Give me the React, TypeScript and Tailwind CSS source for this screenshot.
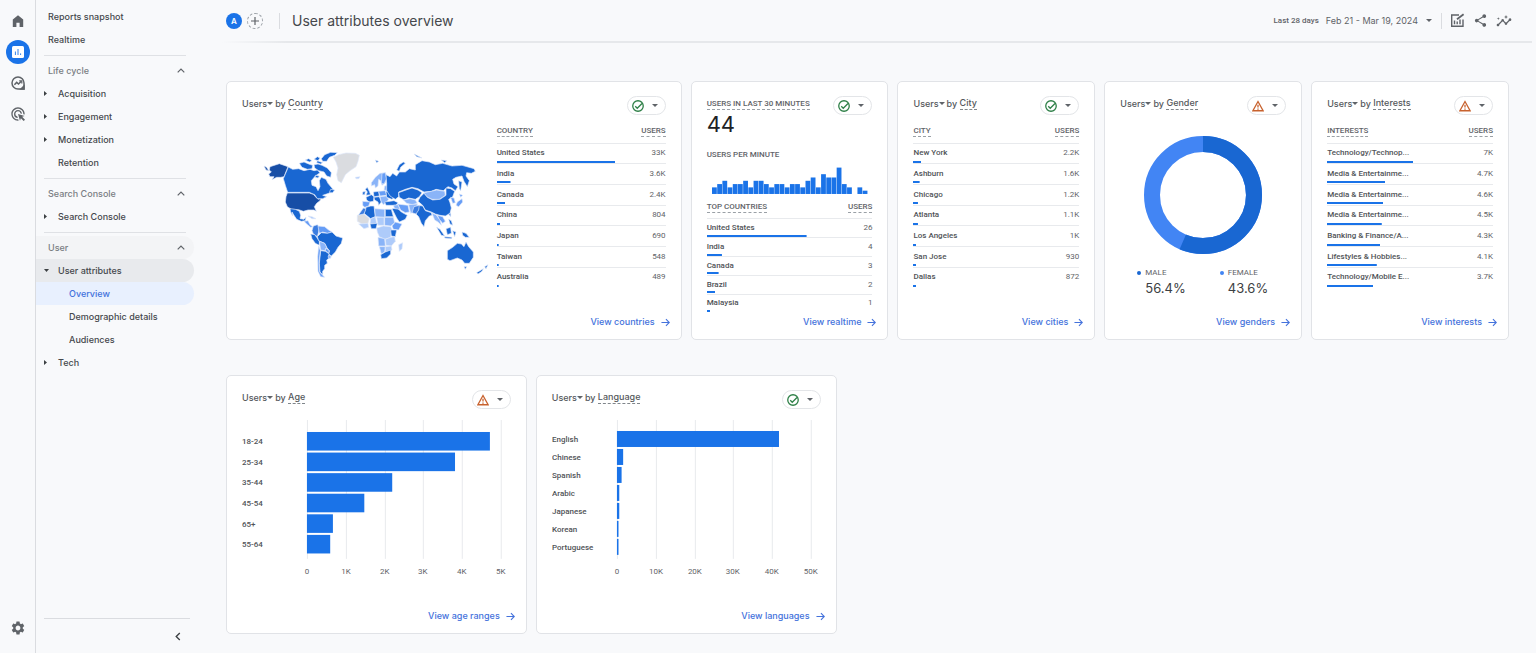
import type { ReactNode } from 'react';
import { MdAdsClick, MdInsights, MdSettings, MdShare } from 'react-icons/md';

type Status = 'ok' | 'warn';

interface Row {
  name: string;
  users: string;
  /** bar length, percent of the table width */
  bar: number;
}

const countries: Row[] = [
  { name: 'United States', users: '33K', bar: 70 },
  { name: 'India', users: '3.6K', bar: 8 },
  { name: 'Canada', users: '2.4K', bar: 5 },
  { name: 'China', users: '804', bar: 2 },
  { name: 'Japan', users: '690', bar: 1 },
  { name: 'Taiwan', users: '548', bar: 1 },
  { name: 'Australia', users: '489', bar: 1 },
];

const realtime: Row[] = [
  { name: 'United States', users: '26', bar: 60 },
  { name: 'India', users: '4', bar: 9 },
  { name: 'Canada', users: '3', bar: 7 },
  { name: 'Brazil', users: '2', bar: 5 },
  { name: 'Malaysia', users: '1', bar: 2 },
];

const cities: Row[] = [
  { name: 'New York', users: '2.2K', bar: 5 },
  { name: 'Ashburn', users: '1.6K', bar: 4 },
  { name: 'Chicago', users: '1.2K', bar: 3 },
  { name: 'Atlanta', users: '1.1K', bar: 3 },
  { name: 'Los Angeles', users: '1K', bar: 2 },
  { name: 'San Jose', users: '930', bar: 2 },
  { name: 'Dallas', users: '872', bar: 2 },
];

const interests: Row[] = [
  { name: 'Technology/Technop...', users: '7K', bar: 52 },
  { name: 'Media & Entertainme...', users: '4.7K', bar: 35 },
  { name: 'Media & Entertainme...', users: '4.6K', bar: 34 },
  { name: 'Media & Entertainme...', users: '4.5K', bar: 33 },
  { name: 'Banking & Finance/A...', users: '4.3K', bar: 32 },
  { name: 'Lifestyles & Hobbies...', users: '4.1K', bar: 30 },
  { name: 'Technology/Mobile E...', users: '3.7K', bar: 28 },
];

const perMinute = [2, 3, 4, 2, 3, 3, 4, 2, 4, 4, 3, 2, 3, 3, 2, 3, 3, 2, 4, 5, 2, 6, 5, 5, 8, 3, 2, 0, 2, 1];

const ages = [
  { label: '18-24', value: 4.72 },
  { label: '25-34', value: 3.82 },
  { label: '35-44', value: 2.2 },
  { label: '45-54', value: 1.48 },
  { label: '65+', value: 0.67 },
  { label: '55-64', value: 0.6 },
];

const languages = [
  { label: 'English', value: 41.8 },
  { label: 'Chinese', value: 1.6 },
  { label: 'Spanish', value: 1.2 },
  { label: 'Arabic', value: 0.6 },
  { label: 'Japanese', value: 0.6 },
  { label: 'Korean', value: 0.4 },
  { label: 'Portuguese', value: 0.4 },
];

function Caret({ className = '' }: { className?: string }) {
  return (
    <svg viewBox="0 0 6 3" className={`h-[3px] w-[6px] shrink-0 fill-[#5f6368] ${className}`} aria-hidden="true">
      <path d="M0 0h6L3 3z" />
    </svg>
  );
}

function StatusIcon({ status }: { status: Status }) {
  if (status === 'ok') {
    return (
      <svg viewBox="0 0 24 24" className="size-3" fill="none" stroke="#2f8048" strokeWidth="2.6" aria-hidden="true">
        <circle cx="12" cy="12" r="10.5" />
        <path d="M6.5 12.5l4 4L20 7" />
      </svg>
    );
  }
  return (
    <svg viewBox="0 0 24 24" className="size-3" fill="none" stroke="#c8622e" strokeWidth="2.6" aria-hidden="true">
      <path d="M12 3L1.8 21.5h20.4z" />
      <path d="M12 9.5v5.5M12 17v2.4" />
    </svg>
  );
}

function StatusChip({ status }: { status: Status }) {
  return (
    <button
      type="button"
      aria-label={status === 'ok' ? 'Data quality: good' : 'Data quality: thresholding applied'}
      className="flex h-[19px] w-[39px] shrink-0 items-center justify-between rounded-full border border-[#e3e5e8] pr-[7px] pl-1"
    >
      <StatusIcon status={status} />
      <Caret />
    </button>
  );
}

function CardLink({ children }: { children: ReactNode }) {
  return (
    <a
      href="#"
      className="mt-auto -mr-1 flex items-center gap-[6px] self-end text-[9px] leading-4 font-medium text-[#4472dc]"
    >
      {children}
      <svg viewBox="0 0 10 10" className="size-[9px]" fill="none" stroke="currentColor" strokeWidth="1.2" aria-hidden="true">
        <path d="M0.5 5h8.5M5.5 1.2L9.2 5 5.5 8.8" />
      </svg>
    </a>
  );
}

function Card({ dimension, status, link, children }: {
  dimension?: string;
  status: Status;
  link: string;
  children: ReactNode;
}) {
  return (
    <section className="flex h-[259px] min-w-0 flex-col rounded-[5px] border border-[#e1e3e7] bg-white px-[15px] pt-[14px] pb-[9px]">
      {dimension ? (
        <>
          <header className="flex h-[19px] items-center justify-between">
            <h2 className="flex items-center pb-1 text-[9px] leading-3 font-medium text-[#55585c]">
              <button type="button" className="flex items-center">
                Users
                <Caret />
              </button>
              <span className="ml-[2px]">by&nbsp;</span>
              <span className="border-b border-dashed border-[#80868b]">{dimension}</span>
            </h2>
            <StatusChip status={status} />
          </header>
          {children}
        </>
      ) : (
        children
      )}
      <CardLink>{link}</CardLink>
    </section>
  );
}

function MetricTable({ label, rows, height }: { label: string; rows: Row[]; height: string }) {
  return (
    <table className={`w-full border-collapse font-[Roboto,sans-serif] text-[8px] leading-[10px] text-[#5f6368] ${height}`}>
      <thead>
        <tr className="h-[19px] border-b border-[#e8eaed]">
          <th className="p-0 pb-1 text-left font-medium">
            <span className="border-b border-dashed border-[#9aa0a6] pb-[1px]">{label}</span>
          </th>
          <th className="p-0 pb-1 text-right font-medium">
            <span className="border-b border-dashed border-[#9aa0a6] pb-[1px]">USERS</span>
          </th>
        </tr>
      </thead>
      <tbody>
        {rows.map((row, i) => (
          <tr
            key={i}
            className="border-b border-[#e8eaed] bg-[linear-gradient(#1a73e8,#1a73e8)] bg-bottom-left bg-no-repeat last:border-0"
            style={{ backgroundSize: `${row.bar}% 2px` }}
          >
            <td className="p-0 font-medium text-[#505357]">{row.name}</td>
            <td className="p-0 text-right">{row.users}</td>
          </tr>
        ))}
      </tbody>
    </table>
  );
}

function HBarChart({ data, max, ticks, top, pitch, thickness }: {
  data: { label: string; value: number }[];
  max: number;
  ticks: string[];
  top: number;
  pitch: number;
  thickness: number;
}) {
  const left = 65;
  const span = 194;
  return (
    <svg viewBox="0 0 269 160" className="mt-[11px] w-full font-[Roboto,sans-serif] text-[8px]" role="img">
      {ticks.map((t, i) => {
        const x = Math.round(left + (span * i) / (ticks.length - 1));
        return (
          <g key={t}>
            <path d={`M${x + 0.5} 0V139`} stroke="#e8eaed" />
            <text x={x} y="154" textAnchor="middle" fill="#5f6368">
              {t}
            </text>
          </g>
        );
      })}
      {data.map((d, i) => {
        const y = top + i * pitch;
        return (
          <g key={d.label}>
            <text x="0" y={y + thickness / 2 + 3} fill="#505357" fontWeight="500">
              {d.label}
            </text>
            <rect x={left} y={y} width={(d.value / max) * span} height={thickness} fill="#1a73e8" />
          </g>
        );
      })}
    </svg>
  );
}

function WorldMap() {
  return (
    <svg viewBox="0 0 690 390" className="w-full" role="img" aria-label="Users by country">
      <g transform="translate(-40 -30)" stroke="#dfe9fb" strokeWidth="2" strokeLinejoin="round" fill="#1967d2">
        {/* North America */}
        <g fill="#174ea6">
          <path d="M64 80L80 75 92 71 118 80 106 110 96 112 84 112 70 119 76 110 64 110 60 102 68 96 62 90z" />
          <path d="M46 78L54 82 60 92 52 90z" />
          <path d="M116 159H182L194 163 204 174 210 178 218 174 214 182 204 190 197 200 203 214 196 210 178 210 164 214 150 209 128 208 116 200 110 186 112 170z" />
        </g>
        <path d="M119 81L132 88 150 86 166 92 184 88 196 92 206 90 214 98 200 108 188 122 190 136 202 140 208 152 214 140 212 122 218 112 232 118 238 130 250 144 256 154 240 160 222 166 234 170 222 176 206 176 198 164 182 157H117L110 136 104 116z" />
        <path d="M152 70L166 66 180 72 192 76 190 86 176 88 160 82zM196 58L206 50 214 54 208 62zM218 56L228 44 246 37 266 38 258 46 242 52 234 64 222 64zM196 74L208 72 220 76 236 84 248 98 246 112 234 108 226 96 210 92 198 84zM170 60L180 56 190 62 182 66zM206 62L222 68 216 72 204 68zM200 106L212 108 208 114 200 112zM246 148L258 150 252 158 242 158z" />
        <path d="M124 206L140 208 152 214 156 226 154 236 166 238 172 232 170 242 158 244 144 238 136 226 130 216 132 228 126 216z" />
        <path d="M166 244L178 242 184 254 192 260 186 262 174 252z" fill="#669df6" />
        <path d="M178 228L190 230 202 236 190 236z" fill="#aecbfa" />
        <path d="M254 52L270 44 292 39 320 40 332 46 328 64 322 80 304 92 290 104 278 128 268 122 264 104 268 84 262 66z" fill="#dadce0" />

        {/* South America */}
        <path d="M194 258L206 254 212 262 210 276 206 290 194 282 190 272z" fill="#3c7de0" />
        <path d="M208 258L228 260 240 270 250 276 236 280 222 276 212 280z" fill="#669df6" />
        <path d="M186 282L198 284 204 292 212 304 212 316 200 310 190 296z" />
        <path d="M206 290L218 278 236 280 250 276 262 288 282 294 278 310 268 322 260 336 248 348 240 342 242 332 234 322 228 310 210 302z" />
        <path d="M212 304L228 310 234 322 228 332 216 330z" fill="#8ab4f8" />
        <path d="M232 324L242 332 240 340 230 332z" fill="#669df6" />
        <path d="M216 332L230 334 242 342 242 354 234 360 236 370 228 376 228 386 222 394 222 404 214 396 212 370z" />
        <path d="M210 318L215 332 211 368 213 396 228 412 216 410 208 394 207 350z" fill="#669df6" />
        <path d="M240 344L248 350 244 356 238 352z" fill="#8ab4f8" />

        {/* Europe */}
        <path d="M368 128L380 112 394 100 410 98 414 108 410 128 400 136 396 122 390 118 388 138 380 144 378 134 368 138z" fill="#8ab4f8" />
        <path d="M400 100L410 98 414 116 406 132 398 130z" fill="#669df6" />
        <path d="M320 112L334 110 330 116 322 116z" fill="#aecbfa" />
        <path d="M350 148L356 142 362 154 366 164 352 166 356 156zM342 156L350 154 348 164 342 164z" />
        <path d="M352 172L368 164 376 170 374 184 362 186 354 180z" />
        <path d="M342 184L364 186 360 198 348 202 342 196z" fill="#669df6" />
        <path d="M374 156L390 154 392 168 376 170z" />
        <path d="M390 154L410 152 414 166 394 168z" fill="#669df6" />
        <path d="M376 172L392 170 398 186 390 196 388 186 378 180z" />
        <path d="M394 170L412 168 420 178 414 186 404 194 398 186z" fill="#8ab4f8" />
        <path d="M412 154L436 156 442 166 430 178 414 172z" />
        <path d="M408 138L418 136 420 152 406 150z" fill="#8ab4f8" />

        {/* Russia and Asia */}
        <path d="M412 104L424 110 432 100 444 108 452 96 470 96 482 86 500 90 500 74 520 62 542 66 560 74 582 70 610 78 640 76 676 86 680 94 668 100 654 98 652 108 662 122 656 140 646 124 640 108 622 112 612 118 616 132 628 140 620 152 610 144 598 140 584 152 562 148 548 154 526 156 508 146 490 142 470 148 450 156 450 170 440 178 424 168 414 152 414 130z" />
        <path d="M444 90L452 74 464 66 470 70 456 82 452 94zM496 42L508 48 520 54 504 50zM578 60L594 62 588 68zM630 122L640 126 636 152 632 146zM380 60L390 64 384 68z" />
        <path d="M450 158L472 150 490 144 508 150 520 158 512 170 500 178 480 174 466 180 452 172z" />
        <path d="M526 158L548 154 564 150 588 154 590 166 572 178 550 178 534 170z" fill="#8ab4f8" />
        <path d="M514 172L526 160 536 172 552 180 574 178 592 166 592 144 606 146 618 154 612 170 600 178 604 188 608 204 604 220 590 228 574 226 560 222 548 216 530 210 522 196 508 184z" />
        <path d="M606 172L616 174 620 188 612 190zM626 186L640 176 642 186 630 200 622 196zM632 162L642 166 636 172z" fill="#669df6" />
        <path d="M508 196L522 198 530 212 548 218 550 226 542 228 530 242 526 260 518 250 510 230 502 222z" />
        <path d="M464 180L484 176 500 180 506 190 492 194 474 190z" fill="#8ab4f8" />
        <path d="M408 186L436 182 448 188 442 196 412 196z" />
        <path d="M446 192L462 194 478 196 482 216 470 218 456 210z" fill="#669df6" />
        <path d="M480 194L506 192 502 214 486 220z" fill="#8ab4f8" />
        <path d="M496 200L512 196 510 210 502 222 490 218z" fill="#3c7de0" />
        <path d="M430 206L446 204 458 216 476 226 470 238 452 246 444 234z" />
        <path d="M434 196L448 194 454 208 438 206z" fill="#8ab4f8" />
        <path d="M550 220L562 224 574 240 578 256 568 246 558 240z" fill="#8ab4f8" />
        <path d="M566 226L582 230 590 244 582 250 572 238z" fill="#669df6" />
        <path d="M564 262L574 268 588 288 578 286zM592 266L606 262 608 280 596 284zM588 290L610 292 608 296 588 294zM612 272L622 276 618 290zM600 238L608 242 612 256 604 252zM640 276L652 280 662 292 650 292 642 286z" />
        <path d="M600 222L606 220 606 230z" />

        {/* Africa */}
        <path d="M352 202L366 198 376 198 380 230 366 236 346 220z" />
        <path d="M330 224L344 204 352 206 346 222 336 230z" fill="#3c7de0" />
        <path d="M326 226L346 222 362 236 358 250 340 252 326 244z" fill="#dadce0" />
        <path d="M330 252L358 250 360 262 346 266z" fill="#aecbfa" />
        <path d="M378 206L408 208 408 232 380 230z" fill="#8ab4f8" />
        <path d="M410 208L428 208 434 230 410 230z" />
        <path d="M366 236L380 230 384 250 364 252z" fill="#aecbfa" />
        <path d="M384 232L406 232 406 256 388 256z" fill="#aecbfa" />
        <path d="M408 232L434 232 438 248 426 258 408 256z" fill="#8ab4f8" />
        <path d="M364 252L386 250 382 266 368 266z" />
        <path d="M430 258L440 246 460 252 450 270 434 268z" fill="#669df6" />
        <path d="M384 264L404 258 426 260 430 268 426 292 408 298 392 290 386 276z" fill="#aecbfa" />
        <path d="M426 270L444 270 440 290 428 288z" />
        <path d="M388 292L408 296 410 318 390 318z" fill="#8ab4f8" />
        <path d="M410 298L426 292 438 290 440 304 428 318 412 316z" fill="#aecbfa" />
        <path d="M392 320L410 320 408 336 398 342z" fill="#8ab4f8" />
        <path d="M410 320L428 318 430 330 420 334 410 336z" fill="#aecbfa" />
        <path d="M396 344L410 336 426 330 426 342 414 354 398 356z" />
        <path d="M450 314L462 308 460 326 452 334z" fill="#aecbfa" />

        {/* Oceania */}
        <path d="M596 332L612 322 626 310 638 312 646 320 652 306 660 320 674 336 674 352 662 370 648 370 640 360 626 354 604 362 596 358z" />
        <path d="M646 380L654 380 650 388zM708 380L718 374 712 386zM684 398L704 386 700 394 688 402z" />
      </g>
    </svg>
  );
}

function Donut() {
  const r = 51;
  const c = 2 * Math.PI * r;
  return (
    <svg viewBox="0 0 120 120" className="mx-auto mt-5 size-[120px]" role="img" aria-label="Male 56.4%, female 43.6%">
      <g fill="none" strokeWidth="16" transform="rotate(-90 60 60)">
        <circle cx="60" cy="60" r={r} stroke="#4285f4" />
        <circle cx="60" cy="60" r={r} stroke="#1967d2" strokeDasharray={`${c * 0.564} ${c}`} />
      </g>
    </svg>
  );
}

function GenderStat({ label, value, dot }: { label: string; value: string; dot: string }) {
  return (
    <div className="flex gap-1">
      <span className={`mt-[4px] size-1 rounded-full ${dot}`} />
      <dl>
        <dt className="font-[Roboto,sans-serif] text-[8px] leading-3 text-[#5f6368]">{label}</dt>
        <dd className="text-[13px] leading-[18px] text-[#3c4043]">{value}</dd>
      </dl>
    </div>
  );
}

function NavSection({ title, highlighted = false, children }: { title: string; highlighted?: boolean; children: ReactNode }) {
  return (
    <section className="mt-1">
      <div className="mr-2 ml-2 h-px bg-[#dfe1e5]" />
      <button
        type="button"
        aria-expanded="true"
        className={`mt-[3px] flex h-[23px] w-full items-center justify-between rounded-r-full pr-[9px] pl-3 text-[#7a7e83] ${highlighted ? 'bg-[#f3f4f6]' : ''}`}
      >
        {title}
        <svg viewBox="0 0 8 5" className="h-[5px] w-2" fill="none" stroke="#5f6368" strokeWidth="1.2" aria-hidden="true">
          <path d="M0.7 4.3L4 1l3.3 3.3" />
        </svg>
      </button>
      <ul>{children}</ul>
    </section>
  );
}

function NavItem({ label, arrow, active = false }: { label: string; arrow?: 'right' | 'down'; active?: boolean }) {
  return (
    <li>
      <a href="#" className={`flex h-[23px] items-center rounded-r-full pl-2 ${active ? 'bg-[#e8eaed]' : ''}`}>
        <span className="flex w-[14px] items-center">
          {arrow === 'right' && (
            <svg viewBox="0 0 3 5" className="h-[5px] w-[3px] fill-[#3c4043]" aria-hidden="true">
              <path d="M0 0v5l3-2.5z" />
            </svg>
          )}
          {arrow === 'down' && (
            <svg viewBox="0 0 5 3" className="h-[3px] w-[5px] fill-[#3c4043]" aria-hidden="true">
              <path d="M0 0h5L2.5 3z" />
            </svg>
          )}
        </span>
        {label}
      </a>
    </li>
  );
}

function NavSubItem({ label, current = false }: { label: string; current?: boolean }) {
  return (
    <li>
      <a
        href="#"
        aria-current={current ? 'page' : undefined}
        className={`flex h-[23px] items-center rounded-r-full pl-[33px] ${current ? 'bg-[#e8f0fe] text-[#4472dc]' : ''}`}
      >
        {label}
      </a>
    </li>
  );
}

function Rail() {
  return (
    <nav aria-label="Products" className="flex w-9 shrink-0 flex-col items-center border-r border-[#dadce0] text-[#5f6368]">
      <a href="#" aria-label="Home" className="mt-[5px] flex size-[31px] items-center justify-center">
        <svg viewBox="0 0 12 12" className="size-3" fill="currentColor" aria-hidden="true">
          <path d="M0.8 12V4.4L6 .3l5.2 4.1V12H7.6V7.8H4.4V12z" />
        </svg>
      </a>
      <a href="#" aria-label="Reports" className="flex h-[31px] items-center">
        <span className="flex size-6 items-center justify-center rounded-full bg-[#1a73e8]">
          <svg viewBox="0 0 12 12" className="size-3" aria-hidden="true">
            <rect width="12" height="12" rx="1.5" fill="#fff" />
            <path d="M3.4 5.5V9M6 3v6M8.6 7.4V9" stroke="#1a73e8" strokeWidth="0.9" />
          </svg>
        </span>
      </a>
      <a href="#" aria-label="Explore" className="flex size-[31px] items-center justify-center">
        <svg viewBox="0 0 14 14" className="size-[14px]" fill="none" stroke="currentColor" strokeWidth="1.5" aria-hidden="true">
          <path d="M7 1a6 6 0 1 0 0 12h6V7a6 6 0 0 0-6-6z" />
          <path d="M3.4 8.8l2.3-2.4 1.8 1.6 2.8-2.8" />
          <path d="M8.2 4.8h2.6v2.6" strokeWidth="1.2" />
          <path d="M10 13l3-3v3z" fill="currentColor" />
        </svg>
      </a>
      <a href="#" aria-label="Advertising" className="flex size-[31px] items-center justify-center">
        <MdAdsClick className="size-4" />
      </a>
      <a href="#" aria-label="Admin" className="mt-auto mb-[17px]">
        <MdSettings className="size-4" />
      </a>
    </nav>
  );
}

function SideNav() {
  return (
    <nav
      aria-label="Reports"
      className="flex w-[158px] shrink-0 flex-col pt-[5px] text-[9px] font-medium text-[#45484c]"
    >
      <a href="#" className="flex h-[23px] items-center pl-3">Reports snapshot</a>
      <a href="#" className="flex h-[23px] items-center pl-3">Realtime</a>
      <NavSection title="Life cycle">
        <NavItem label="Acquisition" arrow="right" />
        <NavItem label="Engagement" arrow="right" />
        <NavItem label="Monetization" arrow="right" />
        <NavItem label="Retention" />
      </NavSection>
      <NavSection title="Search Console">
        <NavItem label="Search Console" arrow="right" />
      </NavSection>
      <NavSection title="User" highlighted>
        <NavItem label="User attributes" arrow="down" active />
        <NavSubItem label="Overview" current />
        <NavSubItem label="Demographic details" />
        <NavSubItem label="Audiences" />
        <NavItem label="Tech" arrow="right" />
      </NavSection>
      <div className="mt-auto mr-1 ml-2 flex h-[35px] justify-end border-t border-[#dadce0] pr-[9px]">
        <button type="button" aria-label="Collapse navigation" className="flex items-center">
          <svg viewBox="0 0 6 10" className="h-[9px] w-[6px]" fill="none" stroke="#3c4043" strokeWidth="1.5" aria-hidden="true">
            <path d="M5 1L1 5l4 4" />
          </svg>
        </button>
      </div>
    </nav>
  );
}

function TopBar() {
  return (
    <header>
      <div className="flex h-[41px] items-center pr-6 pl-8 text-[#5f6368]">
        <span className="flex size-4 items-center justify-center rounded-full bg-[#1a73e8] text-[8px] font-semibold text-white">
          A
        </span>
        <button
          type="button"
          aria-label="Add comparison"
          className="ml-[5px] flex size-4 items-center justify-center rounded-full border border-dashed border-[#9aa0a6]"
        >
          <svg viewBox="0 0 8 8" className="size-2" stroke="#5f6368" strokeWidth="1.2" aria-hidden="true">
            <path d="M4 0v8M0 4h8" />
          </svg>
        </button>
        <span className="ml-4 h-4 w-px bg-[#dadce0]" />
        <h1 className="ml-3 text-[14px] leading-5 text-[#45484c]">User attributes overview</h1>
        <button type="button" className="ml-auto flex items-center text-[9px]">
          <span className="mr-[7px] font-[Roboto,sans-serif] text-[8px] font-medium">Last 28 days</span>
          Feb 21 - Mar 19, 2024
          <Caret className="ml-2" />
        </button>
        <span className="ml-[9px] h-4 w-px bg-[#dadce0]" />
        <div className="ml-2 flex gap-2">
          <button type="button" aria-label="Customize report">
            <svg viewBox="0 0 15 15" className="size-[15px]" fill="none" stroke="currentColor" strokeWidth="1.4" aria-hidden="true">
              <path d="M9 2H1.7v11.3H13V6.5" />
              <path d="M7 6.2l6.6-5" strokeWidth="1.8" />
              <path d="M4.5 7.5v3.8M7.2 8.5v2.8M10 6.5v4.8" />
            </svg>
          </button>
          <button type="button" aria-label="Share this report">
            <MdShare className="size-[15px]" />
          </button>
          <button type="button" aria-label="Insights">
            <MdInsights className="size-4" />
          </button>
        </div>
      </div>
      <div className="mr-1 ml-7 h-[2px] bg-linear-to-r from-transparent via-[#e6e8eb] via-5% to-[#e6e8eb]" />
    </header>
  );
}

export default function App() {
  return (
    <div className="flex min-h-screen bg-[#f8f9fb] font-[Inter,sans-serif]">
      <Rail />
      <SideNav />
      <div className="min-w-0 flex-1">
        <TopBar />
        <main className="flex flex-col gap-[35px] pt-[38px] pr-[27px] pb-[19px] pl-8">
          <div className="grid grid-cols-[456fr_198fr_198fr_198fr_198fr] gap-[9px]">
            <Card dimension="Country" status="ok" link="View countries">
              <div className="mt-[9px] flex justify-between">
                <div className="ml-5 w-[230px] pt-[26px]">
                  <WorldMap />
                </div>
                <div className="w-[169px]">
                  <MetricTable label="COUNTRY" rows={countries} height="h-[163px]" />
                </div>
              </div>
            </Card>
            <Card status="ok" link="View realtime">
              <header className="flex h-[19px] items-center justify-between">
                <h2 className="pb-1 font-[Roboto,sans-serif] text-[8px] leading-3 font-medium text-[#5f6368]">
                  <span className="border-b border-dashed border-[#9aa0a6] pb-[1px]">USERS IN LAST 30 MINUTES</span>
                </h2>
                <StatusChip status="ok" />
              </header>
              <p className="-mt-[3px] text-[22px] leading-6 text-[#202124]">44</p>
              <h3 className="mt-[13px] font-[Roboto,sans-serif] text-[8px] leading-3 font-medium text-[#5f6368]">
                USERS PER MINUTE
              </h3>
              <svg viewBox="0 0 166 28" className="mt-[5px] w-full" role="img" aria-label="Users per minute">
                {perMinute.map((n, i) => (
                  <rect key={i} x={5 + i * 5.2} y={28 - n * 3.3} width="4.8" height={n * 3.3} fill="#1a73e8" />
                ))}
              </svg>
              <div className="mt-[6px]">
                <MetricTable label="TOP COUNTRIES" rows={realtime} height="h-[112px]" />
              </div>
            </Card>
            <Card dimension="City" status="ok" link="View cities">
              <div className="mt-[9px]">
                <MetricTable label="CITY" rows={cities} height="h-[163px]" />
              </div>
            </Card>
            <Card dimension="Gender" status="warn" link="View genders">
              <Donut />
              <div className="mt-3 flex justify-between pr-[18px] pl-[17px]">
                <GenderStat label="MALE" value="56.4%" dot="bg-[#1967d2]" />
                <GenderStat label="FEMALE" value="43.6%" dot="bg-[#4285f4]" />
              </div>
            </Card>
            <Card dimension="Interests" status="warn" link="View interests">
              <div className="mt-[9px]">
                <MetricTable label="INTERESTS" rows={interests} height="h-[163px]" />
              </div>
            </Card>
          </div>
          <div className="grid grid-cols-[301fr_301fr_664fr] gap-[9px]">
            <Card dimension="Age" status="warn" link="View age ranges">
              <HBarChart
                data={ages}
                max={5}
                ticks={['0', '1K', '2K', '3K', '4K', '5K']}
                top={12}
                pitch={20.6}
                thickness={18.6}
              />
            </Card>
            <Card dimension="Language" status="ok" link="View languages">
              <HBarChart
                data={languages}
                max={50}
                ticks={['0', '10K', '20K', '30K', '40K', '50K']}
                top={11}
                pitch={18}
                thickness={16}
              />
            </Card>
          </div>
        </main>
      </div>
    </div>
  );
}
